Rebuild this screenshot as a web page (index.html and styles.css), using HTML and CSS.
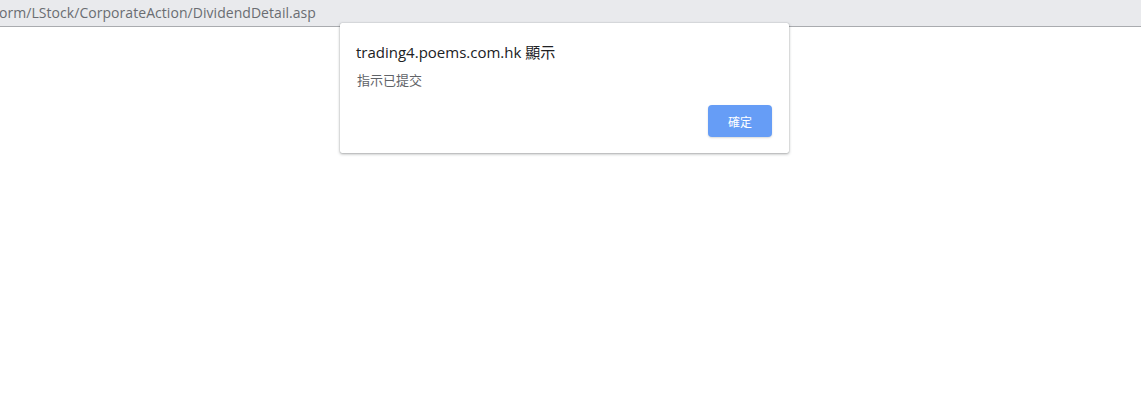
FILE: index.html
```html
<!DOCTYPE html>
<html lang="zh-Hant">
<head>
    <meta charset="UTF-8">
    <title>DividendDetail</title>
    <link rel="stylesheet" href="styles.css">
</head>
<body>
    <!-- Address strip -->
    <div class="urlbar">
        <span class="url">orm/LStock/CorporateAction/DividendDetail.asp</span>
    </div>

    <div class="page"></div>

    <!-- Alert dialog -->
    <div class="dialog">
        <div class="dialog-title">trading4.poems.com.hk 顯示</div>
        <div class="dialog-msg">指示已提交</div>
        <div class="dialog-actions">
            <button class="btn-ok">確定</button>
        </div>
    </div>
</body>
</html>
```

FILE: styles.css
```css
body {
    margin: 0;
    background: #fff;
    font-family: "Open Sans", "Noto Sans CJK TC", sans-serif;
}
.urlbar {
    height: 26px;
    background: #e9eaed;
    border-bottom: 1px solid #a9abaf;
    overflow: hidden;
    white-space: nowrap;
}
.url {
    display: block;
    font-size: 14px;
    line-height: 25px;
    color: #6a6d72;
    margin-left: -1px;
    letter-spacing: 0.05px;
}
.page {
    height: 392px;
}
.dialog {
    position: absolute;
    left: 340px;
    top: 23px;
    width: 449px;
    height: 130px;
    box-sizing: border-box;
    background: #fff;
    border-radius: 2px;
    box-shadow: 0 1px 3px rgba(60, 64, 67, 0.45), 0 0 1px rgba(60, 64, 67, 0.4);
    padding: 18px 17px 0 16px;
}
.dialog-title {
    font-size: 15px;
    line-height: 22px;
    color: #202124;
}
.dialog-msg {
    font-size: 13px;
    line-height: 16px;
    margin-top: 9px;
    margin-left: 1px;
    color: #5f6368;
}
.dialog-actions {
    display: flex;
    justify-content: flex-end;
    margin-top: 17px;
}
.btn-ok {
    width: 64px;
    height: 32px;
    border: none;
    border-radius: 4px;
    background: #669df6;
    color: #fff;
    font-family: "Noto Sans CJK TC", sans-serif;
    font-size: 12px;
    box-shadow: 0 1px 2px rgba(60, 64, 67, 0.2);
    cursor: pointer;
}
```
